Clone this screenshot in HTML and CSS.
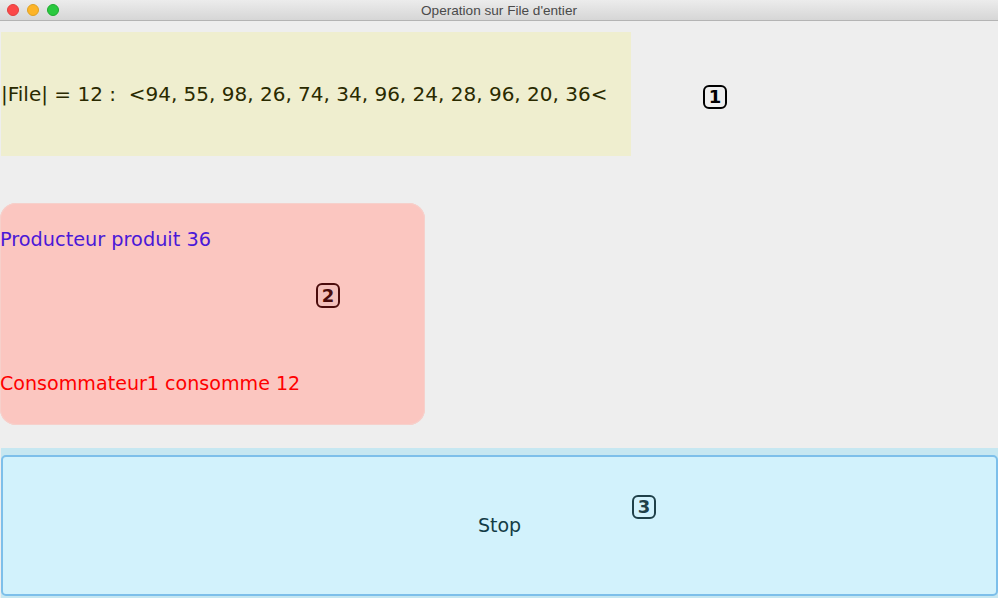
FILE: index.html
```html
<!DOCTYPE html>
<html lang="fr">
<head>
<meta charset="utf-8">
<title>Operation sur File d'entier</title>
<link rel="stylesheet" href="styles.css">
</head>
<body>
<div class="window">
  <header class="titlebar">
    <div class="lights">
      <span class="light red"></span>
      <span class="light yellow"></span>
      <span class="light green"></span>
    </div>
    <div class="title">Operation sur File d'entier</div>
  </header>
  <main class="content">
    <section class="row-file">
      <div class="file-panel"><span class="file-text">|File| = 12 :  &lt;94, 55, 98, 26, 74, 34, 96, 24, 28, 96, 20, 36&lt;</span></div>
      <span class="badge badge-1">1</span>
    </section>
    <section class="log-panel">
      <div class="prod">Producteur produit 36</div>
      <div class="cons">Consommateur1 consomme 12</div>
      <span class="badge badge-2">2</span>
    </section>
    <section class="stop-strip">
      <button class="stop-btn" type="button">Stop<span class="badge badge-3">3</span></button>
    </section>
  </main>
</div>
</body>
</html>
```

FILE: styles.css
```css
html, body {
  margin: 0;
  padding: 0;
  width: 998px;
  height: 598px;
  overflow: hidden;
  background: #eeeeee;
  font-family: "DejaVu Sans", sans-serif;
}

.window {
  display: flex;
  flex-direction: column;
  height: 598px;
}

.titlebar {
  position: relative;
  height: 20px;
  border-bottom: 1px solid #b4b4b4;
  background: linear-gradient(#ececec, #d6d6d6);
  display: flex;
  align-items: center;
  justify-content: center;
}

.lights {
  position: absolute;
  left: 7px;
  top: 4px;
  display: flex;
  gap: 8px;
}

.light {
  width: 12px;
  height: 12px;
  border-radius: 50%;
  box-sizing: border-box;
}
.light.red { background: #fc4848; border: 1px solid #e0403e; }
.light.yellow { background: #fdb427; border: 1px solid #dea123; }
.light.green { background: #2ac93f; border: 1px solid #1eab2f; }

.title {
  font-family: "Liberation Sans", Arial, sans-serif;
  font-size: 13.6px;
  color: #4a4a4a;
}

.content {
  flex: 1;
  display: flex;
  flex-direction: column;
}

.row-file {
  display: flex;
  align-items: center;
  margin-top: 11px;
}

.file-panel {
  margin-left: 1px;
  width: 630px;
  height: 124px;
  background: #efeecf;
  display: flex;
  align-items: center;
  box-sizing: border-box;
}

.file-text {
  white-space: pre;
  font-size: 20px;
  color: #2a2a00;
}

.badge {
  display: inline-flex;
  align-items: center;
  justify-content: center;
  box-sizing: border-box;
  width: 24px;
  height: 24px;
  border: 2px solid currentColor;
  border-radius: 6px;
  font-family: "DejaVu Sans", sans-serif;
  font-weight: bold;
  font-size: 18px;
  line-height: 1;
}

.badge-1 {
  margin-left: 72px;
  margin-top: 6px;
  color: #000000;
}

.log-panel {
  position: relative;
  margin-top: 47px;
  width: 425px;
  height: 222px;
  box-sizing: border-box;
  background: #fbc6c0;
  box-shadow: inset 0 0 0 1px #f6d0cb;
  border-radius: 16px;
  display: flex;
  flex-direction: column;
  justify-content: space-between;
  padding: 25px 0 30px 0;
}

.prod { color: #4a18d8; font-size: 19.3px; }
.cons { color: #ff0000; font-size: 19.1px; }

.badge-2 {
  position: absolute;
  left: 316px;
  top: 80px;
  width: 24px;
  height: 25px;
  color: #4a0c0c;
  background: #f4c0bb;
}

.stop-strip {
  margin-top: 23px;
  margin-left: 1px;
  flex: 1;
  background: #c6e7f1;
  padding-top: 7px;
  padding-bottom: 2px;
  display: flex;
}

.stop-btn {
  position: relative;
  flex: 1;
  margin: 0;
  background: #d2f2fc;
  border: 2px solid #7dbfea;
  border-radius: 5px;
  font-family: "DejaVu Sans", sans-serif;
  font-size: 19px;
  color: #123c46;
  padding: 0 0 2px 0;
}

.badge-3 {
  position: absolute;
  left: 629px;
  top: 38px;
  color: #1f4049;
}
```
